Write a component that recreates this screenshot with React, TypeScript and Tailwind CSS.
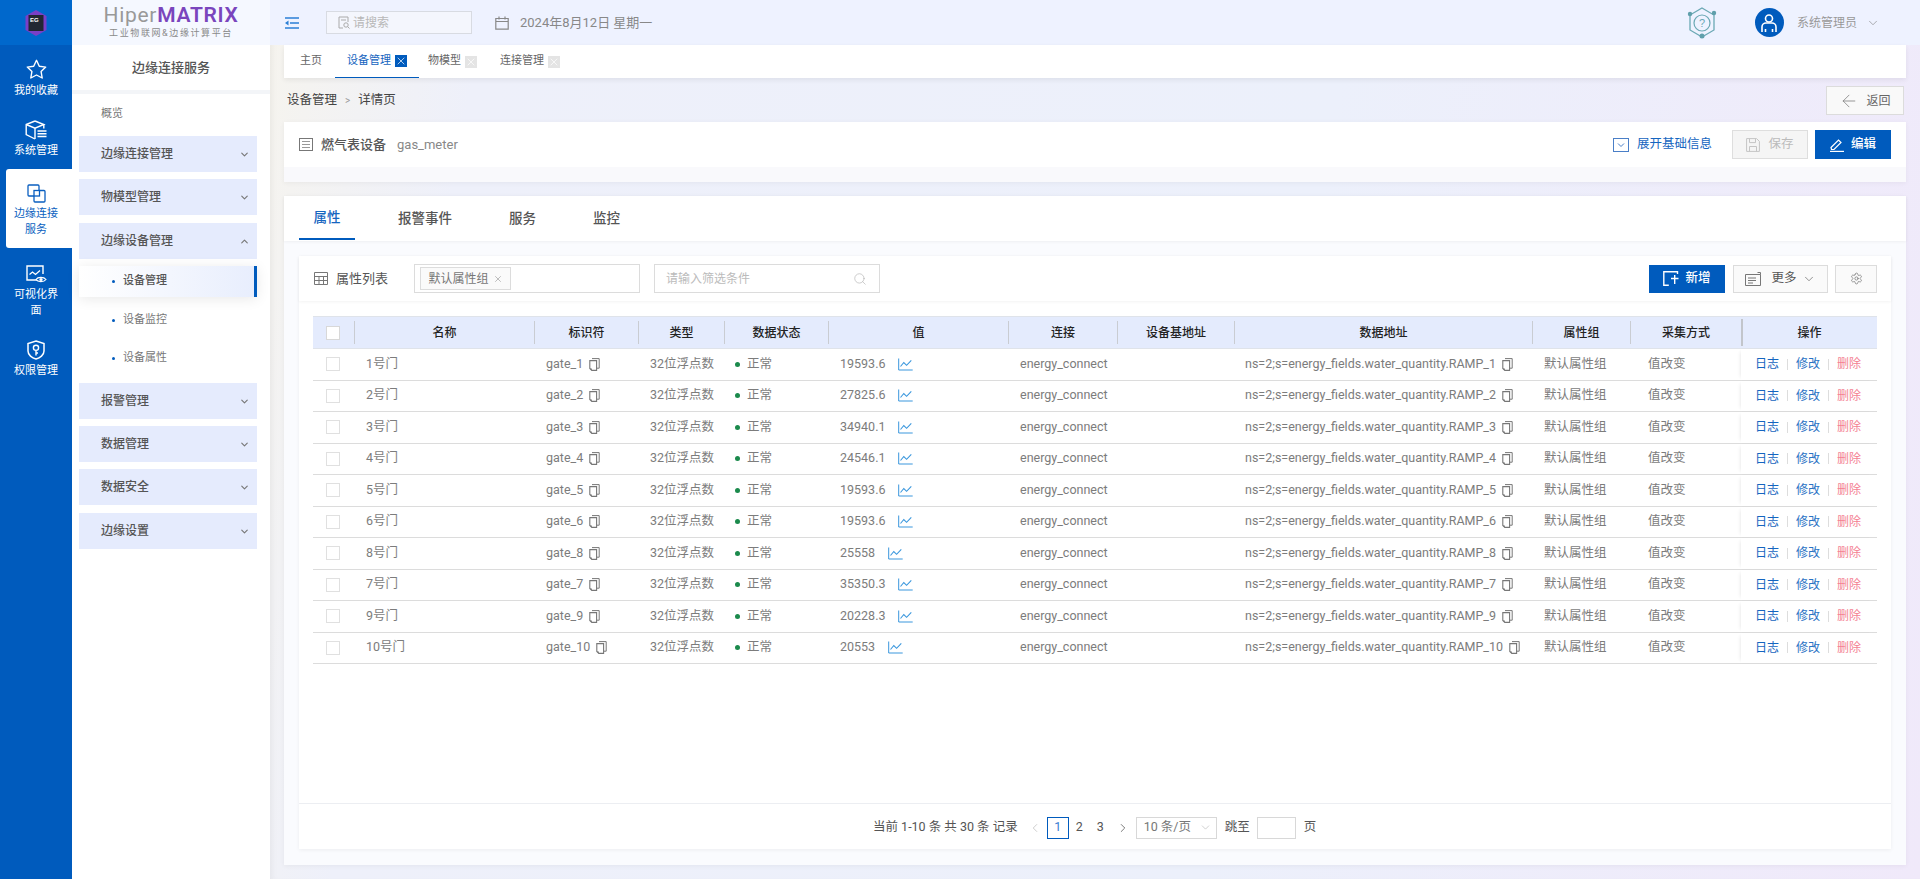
import React from "react";
import { ChevronDown, ChevronUp, ChevronLeft, ChevronRight, ArrowLeft, Settings, Search, X } from "lucide-react";

const rows = [
  ["1号门", "gate_1", "19593.6", "RAMP_1"],
  ["2号门", "gate_2", "27825.6", "RAMP_2"],
  ["3号门", "gate_3", "34940.1", "RAMP_3"],
  ["4号门", "gate_4", "24546.1", "RAMP_4"],
  ["5号门", "gate_5", "19593.6", "RAMP_5"],
  ["6号门", "gate_6", "19593.6", "RAMP_6"],
  ["8号门", "gate_8", "25558", "RAMP_8"],
  ["7号门", "gate_7", "35350.3", "RAMP_7"],
  ["9号门", "gate_9", "20228.3", "RAMP_9"],
  ["10号门", "gate_10", "20553", "RAMP_10"],
];

const gridCols = "grid grid-cols-[41px_180px_104px_86px_104px_180px_109px_117px_298px_98px_111px_135px]";
const heads = ["名称", "标识符", "类型", "数据状态", "值", "连接", "设备基地址", "数据地址", "属性组", "采集方式"];

function Copy() {
  return (
    <svg width="11" height="13" viewBox="0 0 11 13" fill="none" className="shrink-0">
      <path d="M3 .6h7.2v9.6H8" stroke="#777" strokeWidth="1" />
      <path d="M.8 2.600h6.800v9.800H2.800L.8 10.400z" fill="#fff" stroke="#777" strokeWidth="1.100" />
      <path d="M.8 10.400h2v2z" fill="#777" />
    </svg>
  );
}

function Trend() {
  return (
    <svg width="15" height="13" viewBox="0 0 15 13" fill="none" className="shrink-0">
      <path d="M.7 .5v11.500h14" stroke="#3a97dd" strokeWidth="1" />
      <path d="M2.500 8.500l3.300-4 2.800 2.800 4.700-5" stroke="#3a97dd" strokeWidth="1.100" />
    </svg>
  );
}

function RailIcon({ name, active }: { name: string; active?: boolean }) {
  const c = active ? "#0a5fc0" : "#fff";
  if (name === "star")
    return (
      <svg width="21" height="21" viewBox="0 0 21 21" fill="none">
        <path d="M10.500 1.300l2.800 5.900 6.400.9-4.600 4.500 1.100 6.400-5.700-3-5.700 3 1.100-6.400L1.300 8.100l6.400-.9z" stroke={c} strokeWidth="1.400" strokeLinejoin="round" />
      </svg>
    );
  if (name === "box")
    return (
      <svg width="22" height="20" viewBox="0 0 22 20" fill="none">
        <path d="M10 1L1.200 4.500v10L10 19" stroke={c} strokeWidth="1.400" />
        <path d="M1.200 4.500L10 8.200l8.800-3.700L10 1" stroke={c} strokeWidth="1.400" />
        <path d="M10 8.200V19M18.800 4.500v4" stroke={c} strokeWidth="1.400" />
        <path d="M12.500 11h9M12.500 13.700h9M12.500 16.400h9" stroke={c} strokeWidth="1.500" />
      </svg>
    );
  if (name === "edge")
    return (
      <svg width="19" height="19" viewBox="0 0 19 19" fill="none">
        <path d="M7 12H2a1 1 0 0 1-1-1V2a1 1 0 0 1 1-1h9a1 1 0 0 1 1 1v4" stroke={c} strokeWidth="1.300" />
        <rect x="7" y="6.500" width="5.500" height="5.500" stroke={c} strokeWidth="1.300" />
        <path d="M12.500 6.500H17a1 1 0 0 1 1 1V17a1 1 0 0 1-1 1H8a1 1 0 0 1-1-1v-5" stroke={c} strokeWidth="1.300" />
      </svg>
    );
  if (name === "view")
    return (
      <svg width="21" height="19" viewBox="0 0 21 19" fill="none">
        <path d="M11 15H1V1h16v8" stroke={c} strokeWidth="1.400" />
        <path d="M3.500 9.500L6.500 7l3 2.500 4.500-4" stroke={c} strokeWidth="1.300" />
        <path d="M10 14.500c1.800-2.800 7.800-2.800 10 0-2.200 2.800-8.200 2.800-10 0z" stroke={c} strokeWidth="1.200" />
        <circle cx="15" cy="14.500" r="1.600" fill={c} />
      </svg>
    );
  return (
    <svg width="18" height="20" viewBox="0 0 18 20" fill="none">
      <path d="M9 1l8 2.500V11c0 4-4 7-8 8-4-1-8-4-8-8V3.500z" stroke={c} strokeWidth="1.500" />
      <circle cx="9" cy="7.800" r="2.600" stroke={c} strokeWidth="1.400" />
      <path d="M9 10.400v5M9 13h2" stroke={c} strokeWidth="1.400" />
    </svg>
  );
}

function RailItem({ name, label, active, className }: { name: string; label: React.ReactNode; active?: boolean; className?: string }) {
  return (
    <div
      className={`flex flex-col items-center text-[11px] leading-[16px] text-center ${
        active ? "ml-[6px] h-[79px] bg-white text-[#0a5fc0] rounded-l-[3px] pt-[15px] pr-[6px]" : "text-white"
      } ${className ?? ""}`}
    >
      <RailIcon name={name} active={active} />
      <div className="mt-[3px]">{label}</div>
    </div>
  );
}

function Group({ label, open }: { label: string; open?: boolean }) {
  return (
    <div className="h-[36px] ml-[7px] mr-[13px] bg-[#e5ebfd] flex items-center justify-between pl-[22px] pr-[7px] text-[12px] font-medium text-[#555]">
      <span>{label}</span>
      {open ? <ChevronUp size={11} strokeWidth={2.5} color="#777" /> : <ChevronDown size={11} strokeWidth={2.5} color="#777" />}
    </div>
  );
}

function Sub({ label, active }: { label: string; active?: boolean }) {
  return (
    <div
      className={`h-[31px] ml-[7px] mr-[13px] flex items-center pl-[33px] text-[11px] ${
        active
          ? "bg-[linear-gradient(90deg,#ffffff,#e8eefd)] border-r-[3px] border-[#005bbd] text-[#555] font-medium shadow-[0_2px_14px_rgba(0,0,0,0.09)]"
          : "text-[#777]"
      }`}
    >
      <span className="w-[3px] h-[3px] rounded-full bg-[#005bbd] mr-[8px]" />
      {label}
    </div>
  );
}

function TopTab({ label, active }: { label: string; active?: boolean }) {
  return (
    <div className={`h-[33px] flex items-center justify-center gap-[4px] text-[11px] ${active ? "w-[84px] border-b-[1px] border-[#005bbd] text-[#1565c0]" : "text-[#666]"}`}>
      {label}
      <span className={`w-[12px] h-[12px] flex items-center justify-center ${active ? "bg-[#005bbd]" : "bg-[#e4e4e4]"}`}>
        <X size={12} color="#fff" strokeWidth={1.4} />
      </span>
    </div>
  );
}

export default function App() {
  return (
    <div className="flex w-[1920px] h-[879px] overflow-hidden font-['Roboto','Noto_Sans_CJK_SC',sans-serif] text-[#666]">
      {/* Rail */}
      <aside className="w-[72px] shrink-0 bg-[#005bbd] flex flex-col">
        <div className="h-[45px] bg-[#0068cc] flex items-center justify-center">
          <svg width="22" height="26" viewBox="0 0 22 26">
            <path d="M11 0l10.500 6v14L11 26 .5 20V6z" fill="#7a3fc7" />
            <rect x="3.500" y="5" width="15" height="16" fill="#222733" />
            <text x="5" y="12" fontSize="6" fontWeight="700" fill="#fff" fontFamily="Liberation Sans, sans-serif">EG</text>
          </svg>
        </div>
        <RailItem name="star" label="我的收藏" className="mt-[14px]" />
        <RailItem name="box" label="系统管理" className="mt-[21px]" />
        <RailItem name="edge" active label={<>边缘连接<br />服务</>} className="mt-[10px]" />
        <RailItem name="view" label={<>可视化界<br />面</>} className="mt-[17px]" />
        <RailItem name="shield" label="权限管理" className="mt-[21px]" />
      </aside>

      {/* Secondary menu */}
      <aside className="w-[198px] shrink-0 bg-white flex flex-col">
        <div className="h-[45px] bg-[#f5f8ff] flex flex-col items-center">
          <div className="text-[21px] leading-[24px] mt-[3px] tracking-[0.7px] font-['Roboto',sans-serif] text-[#999]">
            Hiper<span className="text-[#7a45bd] font-semibold">MATRIX</span>
          </div>
          <div className="text-[9px] leading-[11px] mt-[1px] tracking-[1.6px] text-[#8a8a8a]">工业物联网&边缘计算平台</div>
        </div>
        <div className="h-[45px] flex items-center justify-center text-[13px] text-[#555] font-medium">边缘连接服务</div>
        <div className="h-[4px] bg-[#f3f5f8]" />
        <div className="h-[42px] flex items-center pl-[29px] pb-[2px] text-[11px] text-[#777]">概览</div>
        <div className="flex flex-col">
          <Group label="边缘连接管理" />
          <div className="h-[7px]" />
          <Group label="物模型管理" />
          <div className="h-[8px]" />
          <Group label="边缘设备管理" open />
          <div className="h-[7px]" />
          <Sub label="设备管理" active />
          <div className="h-[8px]" />
          <Sub label="设备监控" />
          <div className="h-[7px]" />
          <Sub label="设备属性" />
          <div className="h-[9px]" />
          <Group label="报警管理" />
          <div className="h-[7px]" />
          <Group label="数据管理" />
          <div className="h-[7px]" />
          <Group label="数据安全" />
          <div className="h-[8px]" />
          <Group label="边缘设置" />
        </div>
      </aside>

      {/* Main */}
      <main className="flex-1 flex flex-col bg-[linear-gradient(100deg,#f6f4ee_0%,#eef0fa_12%,#ecf0fb_60%,#f0e9fa_100%)] shadow-[inset_6px_0_6px_-4px_rgba(0,0,0,0.05)]">
        <header className="h-[45px] shrink-0 bg-[#eef2ff] flex items-center pl-[15px] pr-[40px]">
          <svg width="14" height="12" viewBox="0 0 14 12" fill="none">
            <path d="M0 1h14M5 6h9M0 11h14" stroke="#2b7fd6" strokeWidth="1.500" />
            <path d="M3.500 3.500L0 6l3.500 2.500z" fill="#2b7fd6" />
          </svg>
          <div className="ml-[27px] w-[146px] h-[23px] border border-[#d8dbe2] bg-[#f4f6fd] flex items-center pl-[11px] text-[12px] text-[#b8b8b8] gap-[3px]">
            <svg width="12" height="13" viewBox="0 0 12 13" fill="none">
              <path d="M5 12H1V1h9v5" stroke="#aaa" strokeWidth="1" />
              <circle cx="8" cy="9" r="2.200" stroke="#aaa" />
              <path d="M9.500 10.500L11.500 12.500M3 4h5" stroke="#aaa" />
            </svg>
            请搜索
          </div>
          <svg width="14" height="14" viewBox="0 0 14 14" fill="none" className="ml-[23px]">
            <path d="M.8 2.500h12.400v10.700H.8zM.8 5.500h12.400M4 .5v3M10 .5v3" stroke="#888" strokeWidth="1.200" />
          </svg>
          <div className="ml-[11px] text-[13px] text-[#888]">2024年8月12日 星期一</div>
          <div className="flex-1" />
          <svg width="30" height="33" viewBox="0 0 30 33" fill="none">
            <path d="M15 2l12 7v15l-12 7-12-7V9z" stroke="#6aa8b4" strokeWidth="1.300" />
            <circle cx="15" cy="17" r="8" stroke="#6aa8b4" strokeWidth="1.200" />
            <circle cx="3" cy="8" r="2.200" fill="#5f9fab" />
            <circle cx="27" cy="7" r="2.200" fill="#5f9fab" />
            <circle cx="15" cy="30" r="2.500" fill="#5f9fab" />
            <text x="15" y="21" fontSize="11" textAnchor="middle" fill="#6aa8b4" fontFamily="Liberation Sans, sans-serif">?</text>
          </svg>
          <div className="ml-[38px] w-[29px] h-[29px] rounded-full bg-[#005bbd] flex items-center justify-center">
            <svg width="18" height="20" viewBox="0 0 18 20" fill="none">
              <circle cx="9" cy="5.500" r="3.500" stroke="#fff" strokeWidth="1.600" />
              <path d="M2 19v-5c0-2.500 2-4 4-4h6c2 0 4 1.500 4 4v5M5.500 19v-3M12.500 19v-3" stroke="#fff" strokeWidth="1.600" />
            </svg>
          </div>
          <div className="ml-[13px] text-[12px] text-[#999]">系统管理员</div>
          <ChevronDown size={14} strokeWidth={1} color="#777" className="ml-[9px]" />
        </header>

        <div className="pl-[14px] pr-[14px] flex flex-col flex-1">
          {/* tab strip */}
          <div className="h-[33px] bg-white shadow-[0_2px_5px_rgba(0,0,0,0.07)] flex items-center pl-[16px]">
            <div className="w-[32px] text-[11px] text-[#666]">主页</div>
            <div className="ml-[3px]"><TopTab label="设备管理" active /></div>
            <div className="ml-[9px]"><TopTab label="物模型" /></div>
            <div className="ml-[23px]"><TopTab label="连接管理" /></div>
          </div>

          {/* breadcrumb */}
          <div className="h-[44px] flex items-center">
            <span className="ml-[3px] text-[12.5px] text-[#444]">设备管理</span>
            <span className="mx-[8px] text-[10px] text-[#999]">&gt;</span>
            <span className="text-[12.5px] text-[#444]">详情页</span>
            <div className="flex-1" />
            <div className="mr-[2px] w-[78px] h-[29px] mt-[1px] border border-[#dcdcdc] bg-[#f9f9f9] flex items-center justify-center gap-[7px] text-[12px] text-[#666]">
              <ArrowLeft size={20} strokeWidth={0.9} color="#777" />
              返回
            </div>
          </div>

          {/* header card */}
          <div className="h-[60px] bg-[#f9f9fc] shadow-[0_1px_5px_rgba(0,0,0,0.05)]">
            <div className="h-[45px] bg-white flex items-center pl-[15px] pr-[15px]">
              <svg width="14" height="13" viewBox="0 0 14 13" fill="none">
                <rect x=".5" y=".5" width="13" height="12" stroke="#777" />
                <path d="M3 3.500h8M3 6.500h8M3 9.500h8" stroke="#999" strokeWidth="1.200" />
              </svg>
              <span className="ml-[8px] text-[13px] font-medium text-[#555]">燃气表设备</span>
              <span className="ml-[11px] text-[13px] text-[#888]">gas_meter</span>
              <div className="flex-1" />
              <svg width="16" height="14" viewBox="0 0 16 14" fill="none">
                <rect x=".5" y=".5" width="15" height="13" stroke="#4a7fc7" />
                <path d="M5 5.500l3 3 3-3" stroke="#4a7fc7" />
              </svg>
              <span className="ml-[8px] text-[12.5px] text-[#1565c0]">展开基础信息</span>
              <div className="ml-[20px] w-[76px] h-[29px] border border-[#dedede] bg-[#f5f5f5] flex items-center justify-center gap-[8px] text-[12.5px] text-[#bbb]">
                <svg width="14" height="14" viewBox="0 0 14 14" fill="none">
                  <path d="M.6.6h10l2.800 2.800v10H.6zM3.500.6v4h6v-4M3.500 13.400V8.500h7v4.900" stroke="#c5c5c5" />
                </svg>
                保存
              </div>
              <div className="ml-[7px] w-[76px] h-[29px] bg-[#005bbd] flex items-center justify-center gap-[7px] text-[12.5px] text-white font-medium">
                <svg width="14" height="14" viewBox="0 0 14 14" fill="none">
                  <path d="M1 9.500L8.500 2l2.500 2.500L4 11.500H1.500z" stroke="#fff" strokeWidth="1.200" />
                  <path d="M0 13.400h14" stroke="#fff" strokeWidth="1.200" />
                </svg>
                编辑
              </div>
            </div>
          </div>

          {/* main card */}
          <div className="mt-[14px] h-[669px] bg-[#fafbfe] shadow-[0_1px_5px_rgba(0,0,0,0.05)] flex flex-col">
            <div className="h-[45px] shrink-0 bg-white shadow-[0_1px_3px_rgba(0,0,0,0.05)] flex text-[13.5px] text-[#555] font-medium">
              <div className="ml-[15px] w-[56px] h-[44px] border-b-[2px] border-[#005bbd] text-[#1565c0] flex items-center justify-center">属性</div>
              <div className="ml-[43px] h-[44px] flex items-center">报警事件</div>
              <div className="ml-[57px] h-[44px] flex items-center">服务</div>
              <div className="ml-[57px] h-[44px] flex items-center">监控</div>
            </div>

            <div className="mt-[15px] mx-[15px] h-[593px] bg-white shadow-[0_1px_4px_rgba(0,0,0,0.06)] flex flex-col">
              {/* toolbar */}
              <div className="h-[45px] shrink-0 flex items-center pl-[15px] pr-[14px] shadow-[0_1px_3px_rgba(0,0,0,0.05)]">
                <svg width="14" height="13" viewBox="0 0 14 13" fill="none">
                  <path d="M.5.500h13v12H.5zM.5 4.500h13M.5 8.500h13M5 4.500v8M9.500 4.500v8" stroke="#777" />
                </svg>
                <span className="ml-[8px] text-[13px] text-[#555]">属性列表</span>
                <div className="ml-[26px] w-[226px] h-[29px] border border-[#dcdcdc] flex items-center pl-[5px]">
                  <div className="h-[23px] w-[91px] border border-[#dcdcdc] bg-[#fafafa] flex items-center justify-center gap-[4px] text-[12px] text-[#777]">
                    默认属性组
                    <X size={10} strokeWidth={1} color="#666" />
                  </div>
                </div>
                <div className="ml-[14px] w-[226px] h-[29px] border border-[#dcdcdc] flex items-center justify-between pl-[11px] pr-[12px] text-[12px] text-[#bbb]">
                  请输入筛选条件
                  <Search size={14} strokeWidth={1} color="#aaa" />
                </div>
                <div className="flex-1" />
                <div className="w-[76px] h-[28px] bg-[#005bbd] flex items-center justify-center gap-[6px] text-[12.5px] text-white font-medium">
                  <svg width="16" height="15" viewBox="0 0 16 15" fill="none">
                    <path d="M14.500 3V.8H.8v13.400h5M8 7.500h7.500M11.700 4v9" stroke="#fff" strokeWidth="1.400" />
                  </svg>
                  新增
                </div>
                <div className="ml-[8px] w-[95px] h-[28px] border border-[#dcdcdc] bg-[#fafafa] flex items-center justify-center gap-[5px] text-[12.5px] text-[#555]">
                  <svg width="16" height="14" viewBox="0 0 16 14" fill="none">
                    <path d="M.5 2.500h15v11H.5zM12.500 .5h3v2M3 6h8M3 8.500h8M3 11h5" stroke="#777" />
                  </svg>
                  <span className="ml-[5px]">更多</span>
                  <ChevronDown size={14} strokeWidth={1.200} color="#666" />
                </div>
                <div className="ml-[7px] w-[42px] h-[28px] border border-[#dcdcdc] bg-[#fafafa] flex items-center justify-center">
                  <Settings size={13} strokeWidth={1.200} color="#666" />
                </div>
              </div>

              {/* table */}
              <div className="mt-[15px] mx-[14px] flex-1 flex flex-col text-[12.5px]">
                <div className={`${gridCols} h-[33px] shrink-0 bg-[#e4ebfd] border-y border-[#dfe3ea] text-[#222] font-medium text-[12px] text-center`}>
                  <div className="flex items-center pl-[13px]">
                    <span className="w-[14px] h-[14px] border border-[#d8d8d8] bg-white" />
                  </div>
                  {heads.map((h) => (
                    <div key={h} className="my-[4px] border-l border-[#c9ccd2] flex items-center justify-center">{h}</div>
                  ))}
                  <div className="my-[2px] border-l-2 border-[#c2c5cb] flex items-center justify-center">操作</div>
                </div>
                {rows.map(([name, gate, val, ramp]) => (
                  <div key={gate} className={`${gridCols} h-[31.5px] shrink-0 border-b border-[#dcdcdc] text-[#7c7c7c] items-center`}>
                    <div className="pl-[13px] flex items-center">
                      <span className="w-[14px] h-[14px] border border-[#e0e0e0] bg-white" />
                    </div>
                    <div className="pl-[12px]">{name}</div>
                    <div className="pl-[12px] flex items-center gap-[6px]">{gate}<Copy /></div>
                    <div className="pl-[12px]">32位浮点数</div>
                    <div className="pl-[11px] flex items-center">
                      <span className="w-[5px] h-[5px] rounded-full bg-[#1b8a4c] mr-[7px]" />
                      正常
                    </div>
                    <div className="pl-[12px] flex items-center gap-[13px]">{val}<Trend /></div>
                    <div className="pl-[12px]">energy_connect</div>
                    <div />
                    <div className="pl-[11px] flex items-center gap-[6px] whitespace-nowrap">
                      ns=2;s=energy_fields.water_quantity.{ramp}
                      <Copy />
                    </div>
                    <div className="pl-[12px]">默认属性组</div>
                    <div className="pl-[18px]">值改变</div>
                    <div className="h-full pl-[14px] flex items-center shadow-[-3px_0_4px_-3px_rgba(0,0,0,0.12)] text-[12px]">
                      <span className="text-[#1565c0]">日志</span>
                      <span className="mx-[8px] w-px h-[11px] bg-[#ddd]" />
                      <span className="text-[#2a72c4]">修改</span>
                      <span className="mx-[8px] w-px h-[11px] bg-[#ddd]" />
                      <span className="text-[#f47f92]">删除</span>
                    </div>
                  </div>
                ))}
                <div className="flex-1" />
              </div>

              {/* footer */}
              <div className="h-[46px] shrink-0 border-t border-[#eceef2] flex items-center pt-[2px] pl-[574px] text-[12.5px] text-[#555]">
                <span>当前 1-10 条 共 30 条 记录</span>
                <ChevronLeft size={14} strokeWidth={1} color="#aaa" className="ml-[10px]" />
                <span className="ml-[5px] w-[22px] h-[22px] border border-[#005bbd] flex items-center justify-center text-[#3a80d2]">1</span>
                <span className="w-[21px] text-center">2</span>
                <span className="w-[21px] text-center">3</span>
                <ChevronRight size={14} strokeWidth={1.200} color="#444" className="ml-[5px]" />
                <div className="ml-[6px] w-[81px] h-[22px] border border-[#d8d8d8] flex items-center justify-between pl-[7px] pr-[4px] text-[#777]">
                  10 条/页
                  <ChevronDown size={13} strokeWidth={1} color="#aaa" />
                </div>
                <span className="ml-[8px]">跳至</span>
                <span className="ml-[7px] w-[39px] h-[22px] border border-[#d8d8d8]" />
                <span className="ml-[8px]">页</span>
              </div>
            </div>
          </div>
        </div>
      </main>
    </div>
  );
}
